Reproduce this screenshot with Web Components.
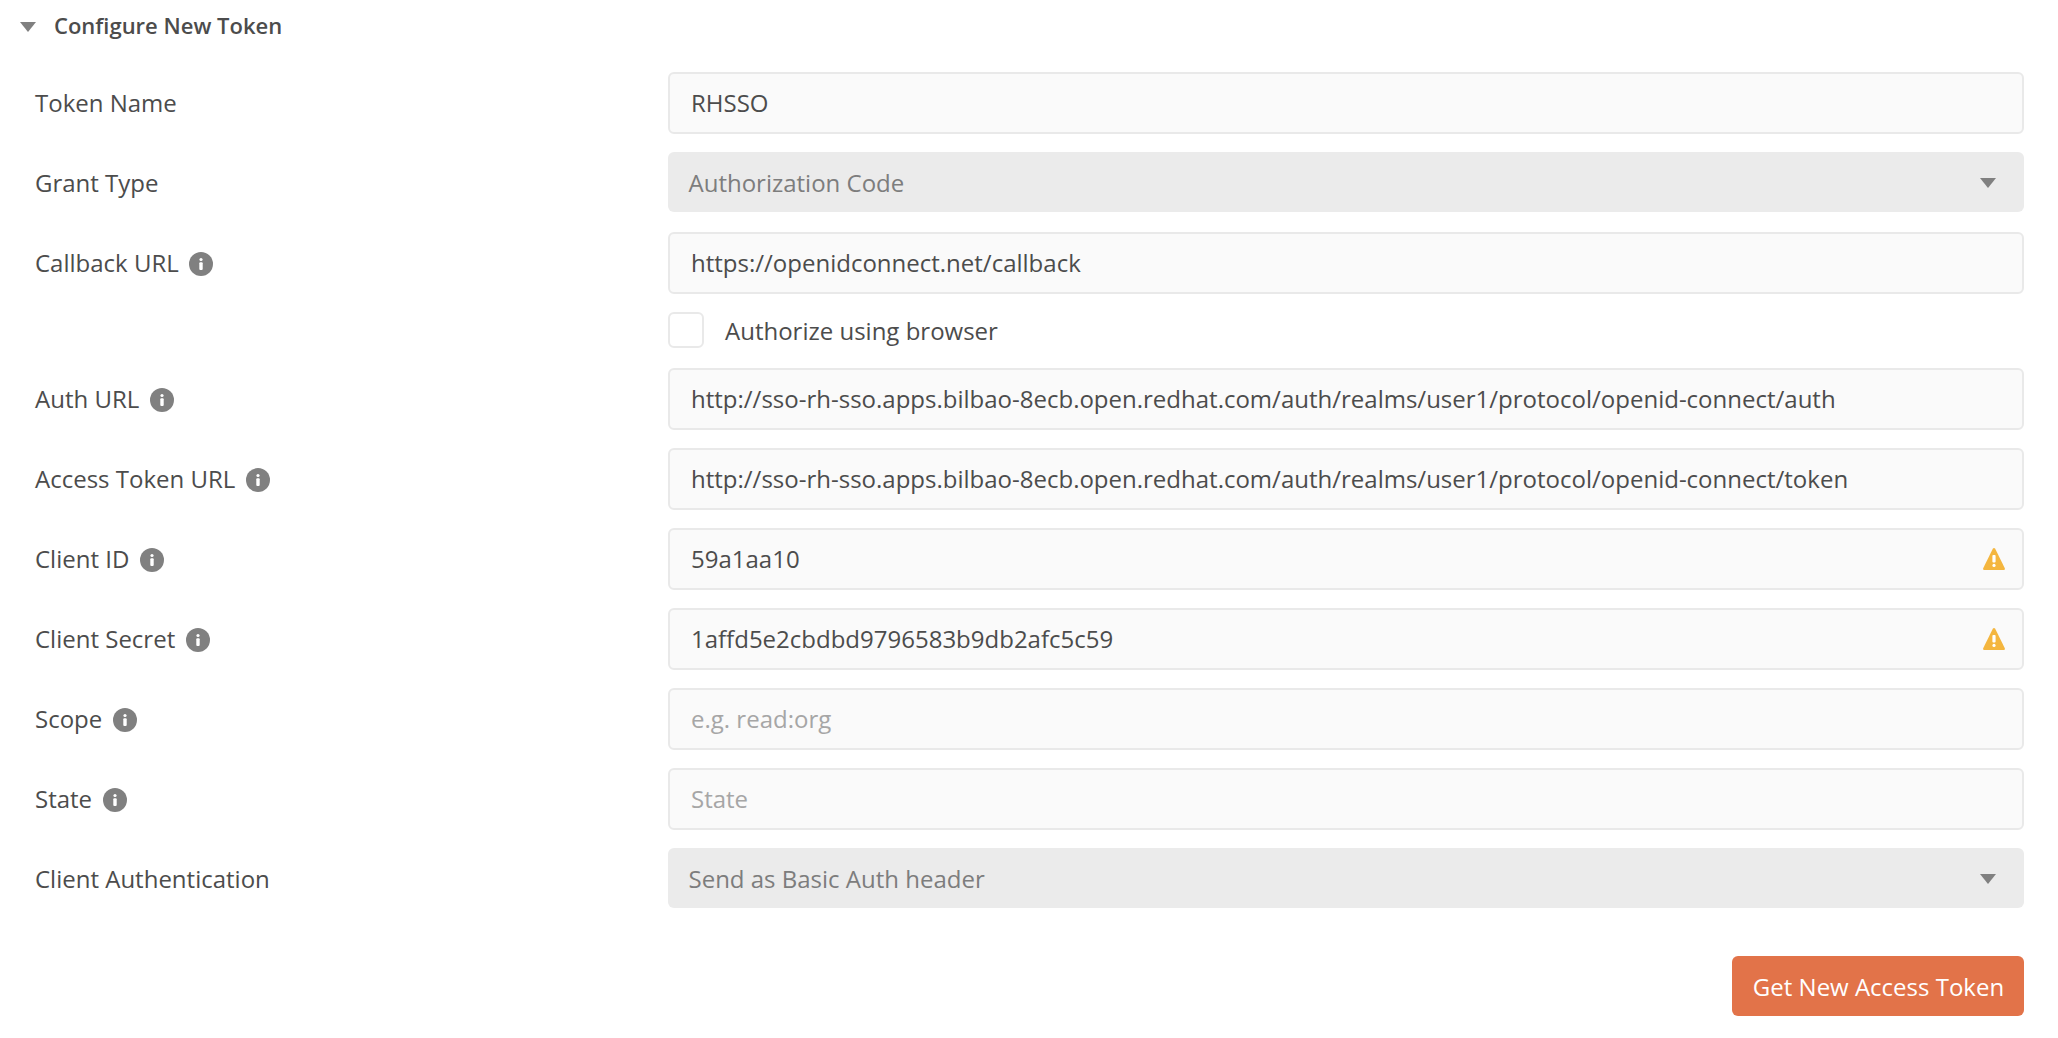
<!DOCTYPE html>
<html lang="en">
<head>
<meta charset="utf-8">
<title>Configure New Token</title>
<style>
  html, body { margin: 0; background: #fff; }
  body { font: 24px/32px "Open Sans", "Noto Sans", sans-serif; color: #4c4c4c; }
</style>
</head>
<body>
<token-form heading="Configure New Token">
  <form-row label="Token Name"><text-field value="RHSSO"></text-field></form-row>
  <form-row label="Grant Type"><select-field>Authorization Code</select-field></form-row>
  <form-row label="Callback URL" info><text-field value="https://openidconnect.net/callback"></text-field></form-row>
  <form-row compact><check-box>Authorize using browser</check-box></form-row>
  <form-row label="Auth URL" info><text-field value="http://sso-rh-sso.apps.bilbao-8ecb.open.redhat.com/auth/realms/user1/protocol/openid-connect/auth"></text-field></form-row>
  <form-row label="Access Token URL" info><text-field value="http://sso-rh-sso.apps.bilbao-8ecb.open.redhat.com/auth/realms/user1/protocol/openid-connect/token"></text-field></form-row>
  <form-row label="Client ID" info><text-field value="59a1aa10" warn></text-field></form-row>
  <form-row label="Client Secret" info><text-field value="1affd5e2cbdbd9796583b9db2afc5c59" warn></text-field></form-row>
  <form-row label="Scope" info><text-field placeholder="e.g. read:org"></text-field></form-row>
  <form-row label="State" info><text-field placeholder="State"></text-field></form-row>
  <form-row label="Client Authentication"><select-field>Send as Basic Auth header</select-field></form-row>
  <action-button slot="actions">Get New Access Token</action-button>
</token-form>
<script>
const define = (name, render) => customElements.define(name, class extends HTMLElement {
  connectedCallback() {
    if (this.shadowRoot) return;
    this.attachShadow({ mode: "open" }).innerHTML = render(this);
  }
});

define("caret-down", () => `
  <style>:host { display: block; flex: none; width: 16px; height: 10px; } svg { display: block; }</style>
  <svg width="16" height="10"><path d="M0 0H16L8 10Z" fill="#808080"/></svg>`);

define("info-icon", () => `
  <style>:host { display: block; flex: none; width: 24px; height: 24px; } svg { display: block; }</style>
  <svg width="24" height="24"><circle cx="12" cy="12" r="12" fill="#808080"/><circle cx="12" cy="7.5" r="1.6" fill="#fff"/><rect x="10.3" y="10.2" width="3.4" height="7.8" rx="1" fill="#fff"/></svg>`);

define("warning-icon", () => `
  <style>:host { display: block; flex: none; width: 22px; height: 22px; } svg { display: block; }</style>
  <svg width="22" height="22"><path d="M9.8 .7Q11-.7 12.2 .7L21.7 20Q22.4 22 20.8 22H1.2Q-.4 22 .3 20Z" fill="#f4b63f"/><rect x="9.4" y="7" width="3.2" height="7.5" rx="1" fill="#fff"/><circle cx="11" cy="17.4" r="1.6" fill="#fff"/></svg>`);

define("text-field", el => `
  <style>
    :host { display: flex; align-items: center; box-sizing: border-box; height: 62px; padding: 0 17px 0 21px; border: 2px solid #e9e9e9; border-radius: 6px; background: #fafafa; }
    span { flex: 1; white-space: nowrap; }
    .hint { color: #a6a6a6; }
  </style>
  ${el.hasAttribute("value") ? `<span>${el.getAttribute("value")}</span>` : `<span class="hint">${el.getAttribute("placeholder")}</span>`}
  ${el.hasAttribute("warn") ? "<warning-icon></warning-icon>" : ""}`);

define("select-field", () => `
  <style>
    :host { display: flex; align-items: center; justify-content: space-between; box-sizing: border-box; height: 60px; padding: 2px 28px 0 20.5px; border-radius: 6px; background: #ebebeb; color: #7d7d7d; }
  </style>
  <span><slot></slot></span><caret-down></caret-down>`);

define("check-box", () => `
  <style>
    :host { display: flex; align-items: center; gap: 21px; height: 36px; }
    i { box-sizing: border-box; width: 36px; height: 36px; border: 2px solid #e9e9e9; border-radius: 6px; background: #fff; }
    span { padding-top: 2px; }
  </style>
  <i></i><span><slot></slot></span>`);

define("form-row", el => `
  <style>
    :host { display: grid; grid-template-columns: 633px 1fr; align-items: start; height: 62px; }
    :host([compact]) { height: 38px; }
    .label { display: flex; align-items: center; height: 62px; gap: 10.5px; white-space: nowrap; }
    info-icon { margin-top: 2px; }
    :host([compact]) .label { height: 36px; }
  </style>
  <div class="label"><span>${el.getAttribute("label") || ""}</span>${el.hasAttribute("info") ? "<info-icon></info-icon>" : ""}</div>
  <div><slot></slot></div>`);

define("action-button", () => `
  <style>
    :host { display: flex; align-items: center; justify-content: center; box-sizing: border-box; width: 292px; height: 60px; padding: 2px 0 0 1px; border-radius: 6px; background: #e27349; color: #fff; white-space: nowrap; }
  </style>
  <span><slot></slot></span>`);

define("token-form", el => `
  <style>
    :host { display: block; }
    header { display: flex; align-items: center; gap: 18px; box-sizing: border-box; height: 52px; padding: 0 0 2px 20px; font-size: 22px; font-weight: 600; }
    header caret-down { margin-top: 4px; }
    .rows { display: flex; flex-direction: column; gap: 18px; padding: 20px 34px 0 35px; }
    footer { display: flex; justify-content: flex-end; padding: 46px 34px 0 0; }
  </style>
  <header><caret-down></caret-down><span>${el.getAttribute("heading")}</span></header>
  <div class="rows"><slot></slot></div>
  <footer><slot name="actions"></slot></footer>`);
</script>
</body>
</html>
